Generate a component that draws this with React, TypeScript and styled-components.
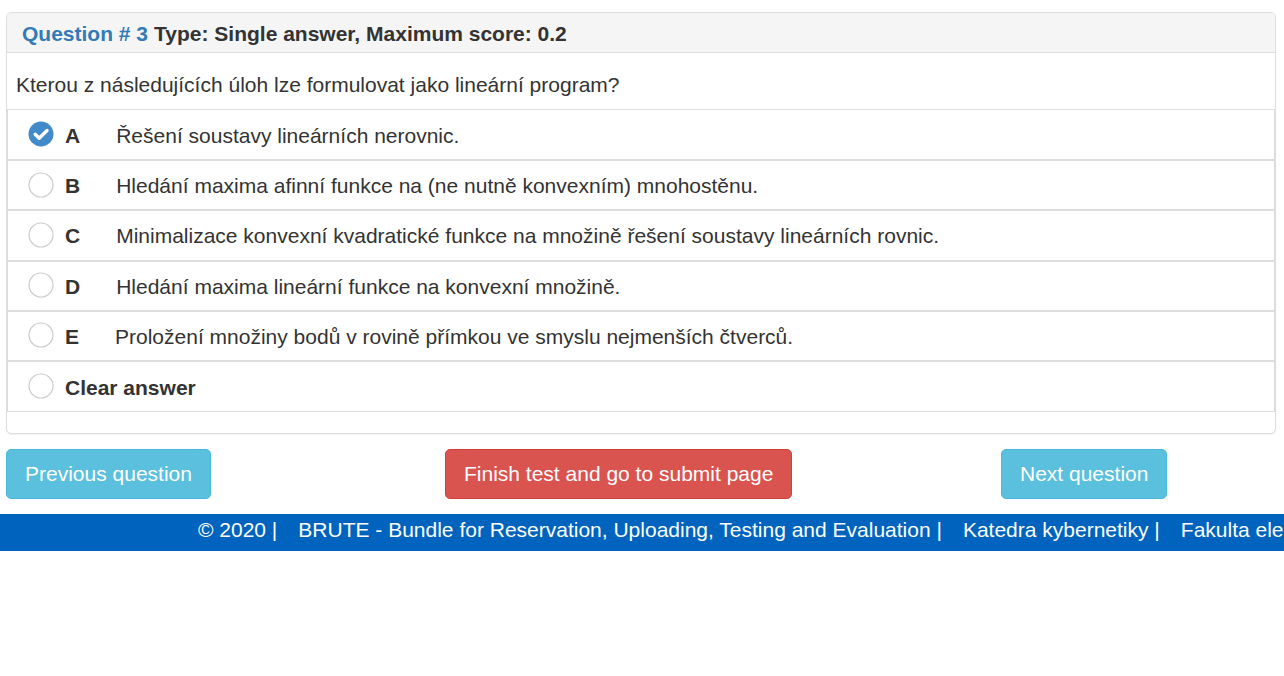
import React, { useState } from 'react';
import styled, { createGlobalStyle } from 'styled-components';

const GlobalStyle = createGlobalStyle`
  body {
    margin: 0;
    font-family: "Liberation Sans", Arial, Helvetica, sans-serif;
    font-size: 21px;
    color: #333;
    background: #fff;
  }
  * { box-sizing: border-box; }
`;

const Page = styled.div`
  padding: 12px 8px 0 6px;
`;

const Panel = styled.div`
  border: 1px solid #ddd;
  border-radius: 5px;
  background: #fff;
  box-shadow: 0 1px 1px rgba(0, 0, 0, 0.05);
  padding-bottom: 21px;
`;

const PanelHeading = styled.div`
  height: 40px;
  padding: 2px 15px 0;
  display: flex;
  align-items: center;
  background: #f5f5f5;
  border-bottom: 1px solid #ddd;
  border-radius: 4px 4px 0 0;
  font-weight: bold;
  font-size: 21px;
`;

const QuestionNo = styled.span`
  color: #337ab7;
  margin-right: 6px;
`;

const QuestionText = styled.div`
  height: 56px;
  padding: 8px 9px 0;
  display: flex;
  align-items: center;
`;

const AnswerList = styled.div`
  border-top: 1px solid #ddd;
  border-bottom: 1px solid #ddd;
`;

const AnswerRow = styled.label`
  height: 50.2px;
  display: flex;
  align-items: center;
  padding: 2px 0 0 20px;
  border: 1px solid #ddd;
  cursor: pointer;
  &:first-child { border-top: 0; }
  &:last-child { border-bottom: 0; }
`;

const RadioBox = styled.span`
  display: flex;
  margin-top: -3px;
`;

const Letter = styled.span`
  font-weight: bold;
  margin-left: 11px;
  margin-right: 36px;
`;

const ClearText = styled.span`
  font-weight: bold;
  margin-left: 11px;
`;

const Actions = styled.div`
  display: grid;
  grid-template-columns: 439px 556px auto;
  align-items: start;
  margin-top: 15px;
`;

type Tone = 'info' | 'danger';

const Button = styled.button<{ $tone: Tone }>`
  justify-self: start;
  height: 50px;
  padding: 0 18px;
  border-radius: 5px;
  font-family: inherit;
  font-size: 21px;
  color: #fff;
  cursor: pointer;
  background: ${(p) => (p.$tone === 'danger' ? '#d9534f' : '#5bc0de')};
  border: 1px solid ${(p) => (p.$tone === 'danger' ? '#d43f3a' : '#46b8da')};
`;

const Footer = styled.footer`
  margin-top: 15px;
  height: 37px;
  padding: 0 0 5px 198px;
  background: #0064be;
  color: #fff;
  display: flex;
  align-items: center;
  white-space: nowrap;
  overflow: hidden;
`;

const FooterItem = styled.span`
  margin-right: 21px;
  flex-shrink: 0;
`;

const Radio: React.FC<{ checked: boolean }> = ({ checked }) => (
  <RadioBox>
    {checked ? (
      <svg width="26" height="26" viewBox="0 0 26 26">
        <circle cx="13" cy="13" r="12.5" fill="#428bca" />
        <path d="M7.2 13.3l4 4 7.8-7.8" fill="none" stroke="#fff" strokeWidth="3.4" strokeLinecap="round" strokeLinejoin="round" />
      </svg>
    ) : (
      <svg width="26" height="26" viewBox="0 0 26 26">
        <circle cx="13" cy="13" r="12" fill="#fff" stroke="#ccc" strokeWidth="1.2" />
      </svg>
    )}
  </RadioBox>
);

const answers = [
  { key: 'A', text: 'Řešení soustavy lineárních nerovnic.' },
  { key: 'B', text: 'Hledání maxima afinní funkce na (ne nutně konvexním) mnohostěnu.' },
  { key: 'C', text: 'Minimalizace konvexní kvadratické funkce na množině řešení soustavy lineárních rovnic.' },
  { key: 'D', text: 'Hledání maxima lineární funkce na konvexní množině.' },
  { key: 'E', text: 'Proložení množiny bodů v rovině přímkou ve smyslu nejmenších čtverců.' },
];

const footerItems = [
  '© 2020 |',
  'BRUTE - Bundle for Reservation, Uploading, Testing and Evaluation |',
  'Katedra kybernetiky |',
  'Fakulta elektrotechnická |',
  'České vysoké učení technické v Praze',
];

export default function App() {
  const [selected, setSelected] = useState<string | null>('A');

  return (
    <>
      <GlobalStyle />
      <Page>
        <Panel>
          <PanelHeading>
            <QuestionNo>Question # 3</QuestionNo>
            Type: Single answer, Maximum score: 0.2
          </PanelHeading>
          <QuestionText>Kterou z následujících úloh lze formulovat jako lineární program?</QuestionText>
          <AnswerList>
            {answers.map((a) => (
              <AnswerRow key={a.key} onClick={() => setSelected(a.key)}>
                <Radio checked={selected === a.key} />
                <Letter>{a.key}</Letter>
                {a.text}
              </AnswerRow>
            ))}
            <AnswerRow onClick={() => setSelected(null)}>
              <Radio checked={false} />
              <ClearText>Clear answer</ClearText>
            </AnswerRow>
          </AnswerList>
        </Panel>
        <Actions>
          <Button $tone="info">Previous question</Button>
          <Button $tone="danger">Finish test and go to submit page</Button>
          <Button $tone="info">Next question</Button>
        </Actions>
      </Page>
      <Footer>
        {footerItems.map((f) => (
          <FooterItem key={f}>{f}</FooterItem>
        ))}
      </Footer>
    </>
  );
}
